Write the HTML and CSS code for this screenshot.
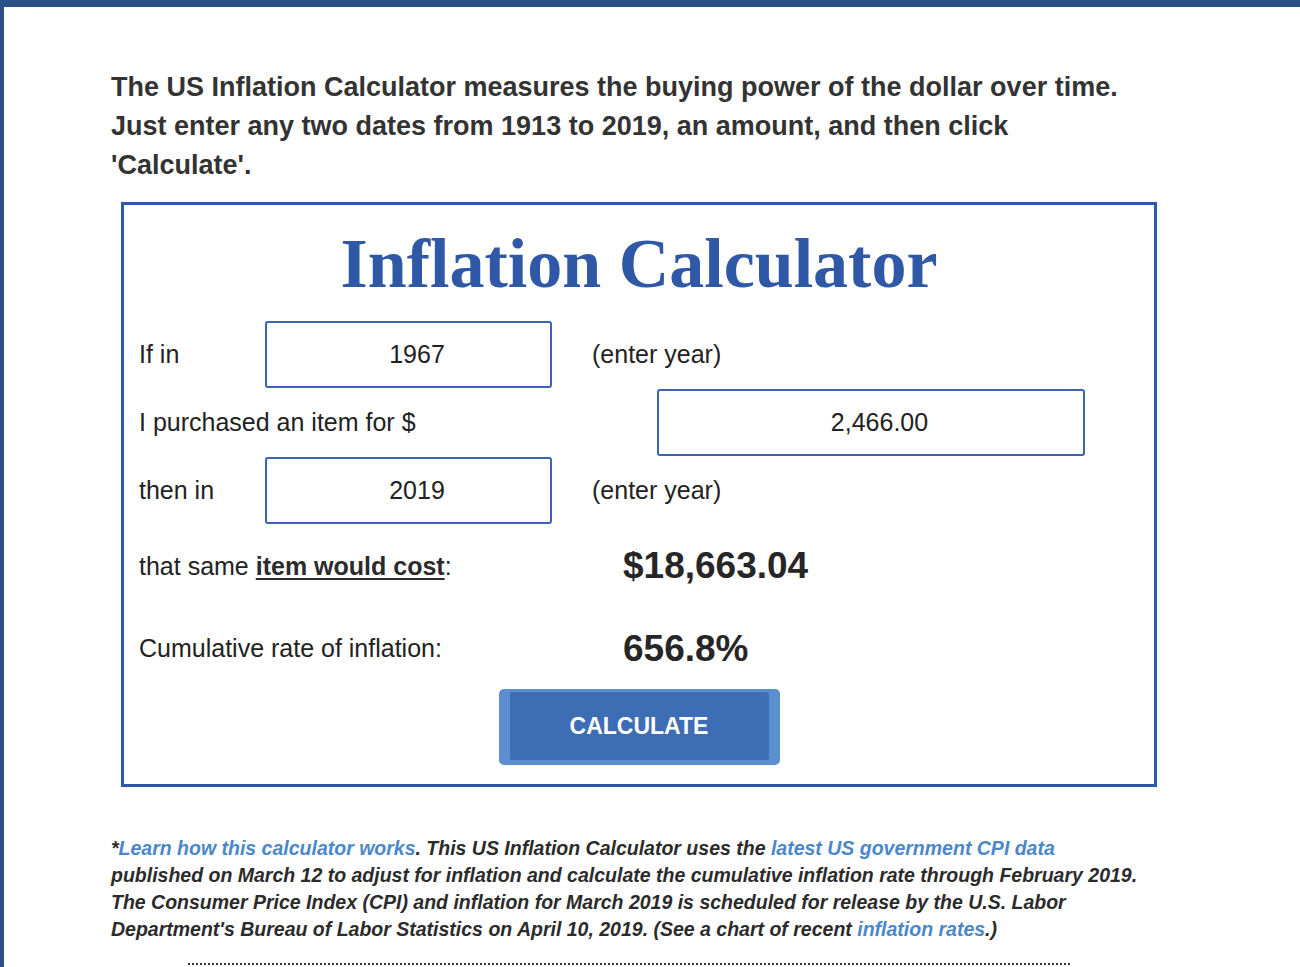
FILE: index.html
```html
<!DOCTYPE html>
<html lang="en">
<head>
<meta charset="utf-8">
<title>US Inflation Calculator</title>
<link rel="stylesheet" href="styles.css">
</head>
<body>
<div class="page">
  <p class="intro">The US Inflation Calculator measures the buying power of the dollar over time. Just enter any two dates from 1913 to 2019, an amount, and then click 'Calculate'.</p>

  <div class="calc">
    <h1 class="calc-title">Inflation Calculator</h1>

    <div class="row row-input">
      <span class="label label-short">If in</span>
      <div class="field field-year">1967</div>
      <span class="hint">(enter year)</span>
    </div>

    <div class="row row-input">
      <span class="label label-long">I purchased an item for $</span>
      <div class="field field-amount">2,466.00</div>
    </div>

    <div class="row row-input">
      <span class="label label-short">then in</span>
      <div class="field field-year">2019</div>
      <span class="hint">(enter year)</span>
    </div>

    <div class="row row-result">
      <span class="label label-result">that same <a class="cost-link" href="#">item would cost</a>:</span>
      <span class="value">$18,663.04</span>
    </div>

    <div class="row row-result row-rate">
      <span class="label label-result">Cumulative rate of inflation:</span>
      <span class="value">656.8%</span>
    </div>

    <div class="actions">
      <button class="btn" type="button"><span class="btn-inner">CALCULATE</span></button>
    </div>
  </div>

  <p class="note">*<a href="#">Learn how this calculator works</a>. This US Inflation Calculator uses the <a href="#">latest US government CPI data</a> published on March 12 to adjust for inflation and calculate the cumulative inflation rate through February 2019. The Consumer Price Index (CPI) and inflation for March 2019 is scheduled for release by the U.S. Labor Department's Bureau of Labor Statistics on April 10, 2019. (See a chart of recent <a href="#">inflation rates</a>.)</p>

  <div class="divider"></div>
</div>
</body>
</html>
```

FILE: styles.css
```css
html, body {
  margin: 0;
  padding: 0;
  background: #ffffff;
}

body {
  font-family: "Liberation Sans", Arial, sans-serif;
  color: #2b2b2b;
  border-top: 7px solid #2c4f86;
  border-left: 4px solid #2c4f86;
  height: 967px;
  box-sizing: border-box;
  overflow: hidden;
}

.page {
  padding: 61px 0 0 107px;
  width: 1060px;
}

.intro {
  margin: 0;
  font-size: 27px;
  font-weight: bold;
  line-height: 39px;
  color: #333333;
  width: 1028px;
}

.calc {
  margin: 17px 0 0 10px;
  width: 1036px;
  border: 3px solid #2f58a6;
  padding: 0 0 19px 15px;
  box-sizing: border-box;
}

.calc-title {
  margin: 0;
  height: 115px;
  line-height: 118px;
  text-align: center;
  font-family: "Liberation Serif", "Times New Roman", serif;
  font-size: 70px;
  font-weight: bold;
  color: #2f58a6;
  padding-right: 15px;
}

.row {
  display: flex;
  align-items: center;
  font-size: 25px;
  color: #222222;
}

.row-input {
  height: 68px;
}

.label-short { width: 126px; }
.label-long { width: 518px; }
.label-result { width: 484px; }

.field {
  height: 67px;
  box-sizing: border-box;
  border: 2px solid #3c63ad;
  border-radius: 3px;
  padding-left: 17px;
  display: flex;
  align-items: center;
  justify-content: center;
  font-size: 25px;
  color: #222222;
  background: #fff;
}

.field-year { width: 287px; }
.field-amount { width: 428px; }

.hint {
  margin-left: 40px;
}

.row-result {
  height: 84px;
}

.row-rate {
  height: 81px;
}

.cost-link {
  color: #2b2b2b;
  font-weight: bold;
  text-decoration: underline;
  text-underline-offset: 3px;
}

.value {
  font-size: 37px;
  font-weight: bold;
  color: #262626;
}

.actions {
  display: flex;
  justify-content: center;
  padding-right: 15px;
}

.btn {
  width: 281px;
  height: 76px;
  padding: 3px 11px 5px 11px;
  background: #5b8fd0;
  border: none;
  border-radius: 5px;
  box-sizing: border-box;
  font-family: "Liberation Sans", Arial, sans-serif;
  cursor: pointer;
}

.btn-inner {
  display: flex;
  align-items: center;
  justify-content: center;
  height: 100%;
  background: #3d6db5;
  border-radius: 2px;
  color: #ffffff;
  font-size: 23px;
  font-weight: bold;
}

.note {
  margin: 48px 0 0 0;
  font-size: 19.5px;
  font-weight: bold;
  font-style: italic;
  line-height: 27px;
  color: #2b2b2b;
  width: 1032px;
}

.note a {
  color: #4b87c9;
  text-decoration: none;
}

.divider {
  margin: 20px 0 0 77px;
  width: 882px;
  border-top: 2px dotted #333333;
}
```
